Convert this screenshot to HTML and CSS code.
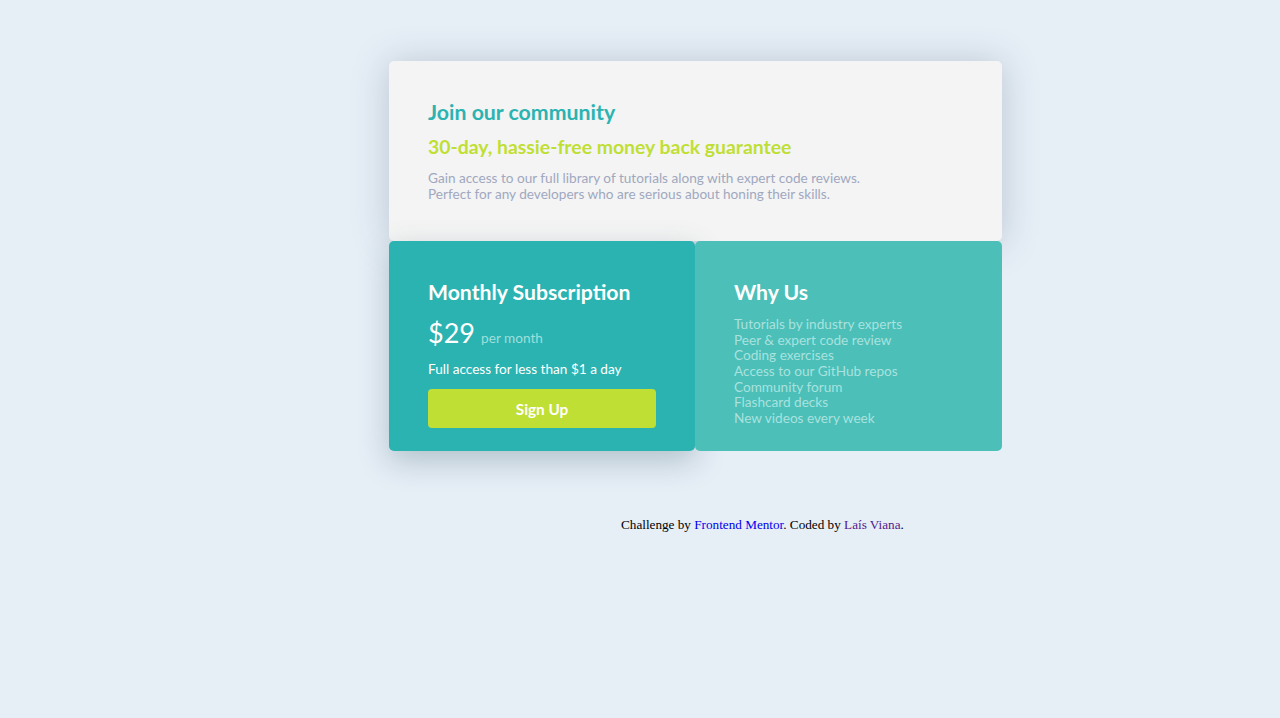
FILE: index.html
```html
<!DOCTYPE html>
<html lang="en">
<head>
<meta charset="utf-8">
<title>Single price grid</title>
<link rel="stylesheet" href="styles.css">
</head>
<body>
<main class="page">
  <div class="grid">
    <section class="card top">
      <h1 class="title">Join our community</h1>
      <h2 class="subtitle">30-day, hassie-free money back guarantee</h2>
      <p class="desc">Gain access to our full library of tutorials along with expert code reviews.<br>Perfect for any developers who are serious about honing their skills.</p>
    </section>
    <div class="row">
      <section class="card monthly">
        <h3 class="heading">Monthly Subscription</h3>
        <p class="price"><span class="amount">$29</span> <span class="per">per month</span></p>
        <p class="access">Full access for less than $1 a day</p>
        <button class="signup">Sign Up</button>
      </section>
      <section class="card why">
        <h3 class="heading">Why Us</h3>
        <ul class="list">
          <li>Tutorials by industry experts</li>
          <li>Peer &amp; expert code review</li>
          <li>Coding exercises</li>
          <li>Access to our GitHub repos</li>
          <li>Community forum</li>
          <li>Flashcard decks</li>
          <li>New videos every week</li>
        </ul>
      </section>
    </div>
  </div>
  <footer class="attribution">Challenge by <a href="#">Frontend Mentor</a>. Coded by <a href="#" class="visited">Laís Viana</a>.</footer>
</main>
</body>
</html>
```
FILE: styles.css
```css
html, body {
  margin: 0;
  padding: 0;
}
body {
  background: #e6eef6;
  min-height: 718px;
}
.page {
  padding-top: 61px;
  padding-left: 389px;
}
.grid {
  width: 613px;
  display: flex;
  flex-direction: column;
  font-family: Lato, "Noto Sans", sans-serif;
}
.card {
  border-radius: 5px;
  box-sizing: border-box;
}
.top {
  background: #f4f4f4;
  height: 180px;
  padding: 39px 39px 0;
  box-shadow: 0 2px 36px rgba(60, 85, 110, 0.26);
}
.title {
  margin: 0;
  font-size: 21.3px;
  font-weight: 700;
  color: #2bb3b1;
  line-height: 24px;
}
.subtitle {
  margin: 11px 0 0;
  font-size: 19.4px;
  font-weight: 700;
  color: #c0df34;
  line-height: 24px;
}
.desc {
  margin: 11px 0 0;
  font-size: 13.6px;
  line-height: 16px;
  color: #a0a8bf;
}
.row {
  display: flex;
  height: 210px;
}
.monthly, .why {
  padding: 39px 39px 0;
}
.monthly {
  width: 306px;
  flex: none;
  background: #2bb3b1;
  color: #fff;
  box-shadow: 0 10px 30px rgba(40, 80, 95, 0.28);
}
.why {
  flex: 1;
  background: #4bbfb8;
  color: #fff;
}
.heading {
  margin: 0;
  font-size: 21.2px;
  font-weight: 700;
  line-height: 24px;
}
.price {
  margin: 13px 0 0;
  line-height: 32px;
}
.amount {
  font-size: 27px;
}
.per {
  font-size: 13.6px;
  color: #9fdfdc;
  margin-left: 2px;
}
.access {
  margin: 7px 0 0;
  font-size: 13.6px;
  line-height: 16px;
}
.signup {
  display: block;
  margin-top: 12px;
  width: 228px;
  height: 39px;
  border: 0;
  border-radius: 4px;
  background: #c0df34;
  color: #fff;
  font-family: inherit;
  font-size: 15.3px;
  font-weight: 700;
}
.list {
  list-style: none;
  margin: 13px 0 0;
  padding: 0;
  font-size: 13.6px;
  line-height: 15.67px;
  color: #a9e2df;
}
.attribution {
  margin-top: 66px;
  padding-left: 232px;
  font-family: "Liberation Serif", serif;
  font-size: 13.2px;
  color: #000;
}
.attribution a {
  color: #0000ee;
  text-decoration: none;
}
.attribution a.visited {
  color: #551a8b;
}
```
